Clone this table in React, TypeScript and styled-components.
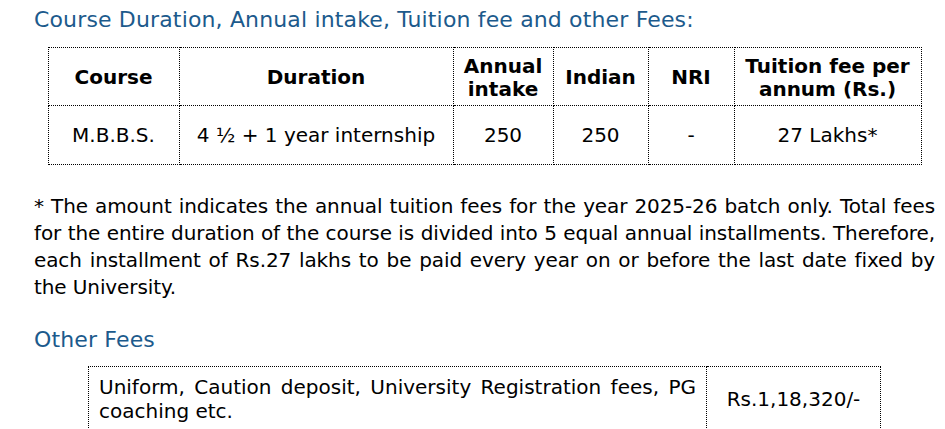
import { FunctionComponent } from "react";
import { styled, createGlobalStyle } from "styled-components";

const GlobalStyle = createGlobalStyle`
  body {
    margin: 0;
    background: #ffffff;
    font-family: "DejaVu Sans", Verdana, sans-serif;
    color: #000000;
  }
`;

interface Fee {
  course: string;
  duration: string;
  intake: string;
  indian: string;
  nri: string;
  tuition: string;
}

const fees: Fee[] = [
  {
    course: "M.B.B.S.",
    duration: "4 ½ + 1 year internship",
    intake: "250",
    indian: "250",
    nri: "-",
    tuition: "27 Lakhs*",
  },
];

const columns = [
  { label: "Course", width: 131 },
  { label: "Duration", width: 274 },
  { label: "Annual intake", width: 100 },
  { label: "Indian", width: 95 },
  { label: "NRI", width: 86 },
  { label: "Tuition fee per annum (Rs.)", width: 187 },
];

const Page = styled.div`
  width: 901px;
  padding: 7px 0 0 34px;
`;

const Heading = styled.h2<{ $top?: number }>`
  margin: ${(p) => p.$top ?? 0}px 0 0;
  font-size: 22px;
  line-height: 26px;
  font-weight: normal;
  letter-spacing: 0.15px;
  color: #1c5a8c;
`;

const Table = styled.table<{ $width: number; $top: number }>`
  width: ${(p) => p.$width}px;
  margin: ${(p) => p.$top}px auto 0;
  border-collapse: collapse;
  table-layout: fixed;
  font-size: 20px;
`;

const HeadCell = styled.th`
  height: 55px;
  padding: 2px 6px 0;
  border: 1px dotted #000;
  font-weight: bold;
  line-height: 23px;
  text-align: center;
  vertical-align: middle;
`;

const Cell = styled.td<{ $align?: string; $padY?: number; $height?: number }>`
  height: ${(p) => p.$height ?? 0}px;
  padding: ${(p) => p.$padY ?? 0}px 10px;
  border: 1px dotted #000;
  line-height: 24px;
  text-align: ${(p) => p.$align ?? "center"};
  vertical-align: middle;
`;

const Note = styled.p`
  margin: 28px 0 0;
  font-size: 20px;
  line-height: 27px;
  letter-spacing: -0.1px;
  text-align: justify;
`;

const Fees: FunctionComponent = () => (
  <Table $width={873} $top={14}>
    <colgroup>
      {columns.map((c) => (
        <col key={c.label} style={{ width: c.width }} />
      ))}
    </colgroup>
    <thead>
      <tr>
        {columns.map((c) => (
          <HeadCell key={c.label}>{c.label}</HeadCell>
        ))}
      </tr>
    </thead>
    <tbody>
      {fees.map((f) => (
        <tr key={f.course}>
          <Cell $height={58}>{f.course}</Cell>
          <Cell $height={58}>{f.duration}</Cell>
          <Cell $height={58}>{f.intake}</Cell>
          <Cell $height={58}>{f.indian}</Cell>
          <Cell $height={58}>{f.nri}</Cell>
          <Cell $height={58}>{f.tuition}</Cell>
        </tr>
      ))}
    </tbody>
  </Table>
);

const App: FunctionComponent = () => (
  <>
    <GlobalStyle />
    <Page>
      <Heading>Course Duration, Annual intake, Tuition fee and other Fees:</Heading>
      <Fees />
      <Note>
        * The amount indicates the annual tuition fees for the year 2025-26 batch only. Total
        fees for the entire duration of the course is divided into 5 equal annual installments.
        Therefore, each installment of Rs.27 lakhs to be paid every year on or before the last
        date fixed by the University.
      </Note>
      <Heading $top={26}>Other Fees</Heading>
      <Table $width={792} $top={13}>
        <colgroup>
          <col style={{ width: 618 }} />
          <col style={{ width: 174 }} />
        </colgroup>
        <tbody>
          <tr>
            <Cell $align="justify" $padY={8}>
              Uniform, Caution deposit, University Registration fees, PG coaching etc.
            </Cell>
            <Cell $padY={8}>Rs.1,18,320/-</Cell>
          </tr>
        </tbody>
      </Table>
    </Page>
  </>
);

export default App;
